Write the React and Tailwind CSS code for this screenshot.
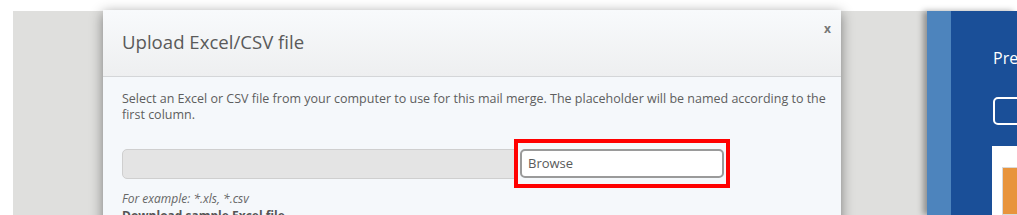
export default function App() {
  return (
    <div className="relative w-[1017px] h-[215px] overflow-hidden bg-white" style={{ fontFamily: '"Open Sans", "Liberation Sans", sans-serif' }}>
      {/* page behind */}
      <div className="flex h-full pt-[11px] pl-[13px]">
        <div className="flex-1 bg-[#dfdfdd]" />
        <div className="flex w-[90px] shrink-0 shadow-[-4px_0_6px_rgba(0,0,0,0.35)]">
          <div className="w-[24px] shrink-0 bg-[#4d84bd]" />
          <div className="flex-1 min-w-0 overflow-hidden bg-[#1a4f98] pl-[42px] pt-[36px] flex flex-col">
            <div className="text-white text-[16px] leading-[22px] whitespace-nowrap">Preview</div>
            <div className="mt-[28px] h-[28px] w-[80px] shrink-0 border-2 border-white rounded-[5px]" />
            <div className="mt-[21px] ml-[-1px] w-[80px] flex-1 bg-white pl-[10px] pt-[21px]">
              <div className="h-full bg-[#e8943c] border border-[#d9d9d9]" />
            </div>
          </div>
        </div>
      </div>

      {/* modal */}
      <div className="absolute left-[103px] top-[10px] w-[738px] h-[230px] bg-[#f5f8fb] shadow-[0_3px_12px_rgba(0,0,0,0.45)]">
        <div className="relative h-[67px] border-b border-[#d4d6d8] bg-gradient-to-b from-[#f8fafc] to-[#eeeff0] pl-[19px] flex items-center">
          <h2 className="text-[#5a5a5a] text-[18.6px] leading-none mt-[-2px]">Upload Excel/CSV file</h2>
          <span className="absolute right-[10px] top-[13px] text-[#777] text-[12px] font-bold leading-none">x</span>
        </div>
        <div className="pl-[19px] pr-[8px] pt-[14px]">
          <p className="text-[#5e5e5e] text-[12.5px] leading-[16px]">
            Select an Excel or CSV file from your computer to use for this mail merge. The placeholder will be named according to the first column.
          </p>
          <div className="mt-[16px] flex items-center">
            <div className="w-[394px] h-[30px] bg-[#e4e4e4] border border-[#cfcfcf] rounded-l-[5px]" />
            <div className="ml-[-2px] border-4 border-[#ff0000] px-[2px] py-[6px]">
              <div className="w-[204px] h-[29px] bg-white border-2 border-[#9a9a9a] rounded-[5px] flex items-center px-[6px] text-[#5a5a5a] text-[13px]">
                Browse
              </div>
            </div>
          </div>
          <p className="mt-[3px] italic text-[#666] text-[12px] leading-[16px]">For example: *.xls, *.csv</p>
          <p className="mt-[1px] font-bold text-[#555] text-[12px] leading-[16px]">Download sample Excel file</p>
        </div>
      </div>
    </div>
  );
}
